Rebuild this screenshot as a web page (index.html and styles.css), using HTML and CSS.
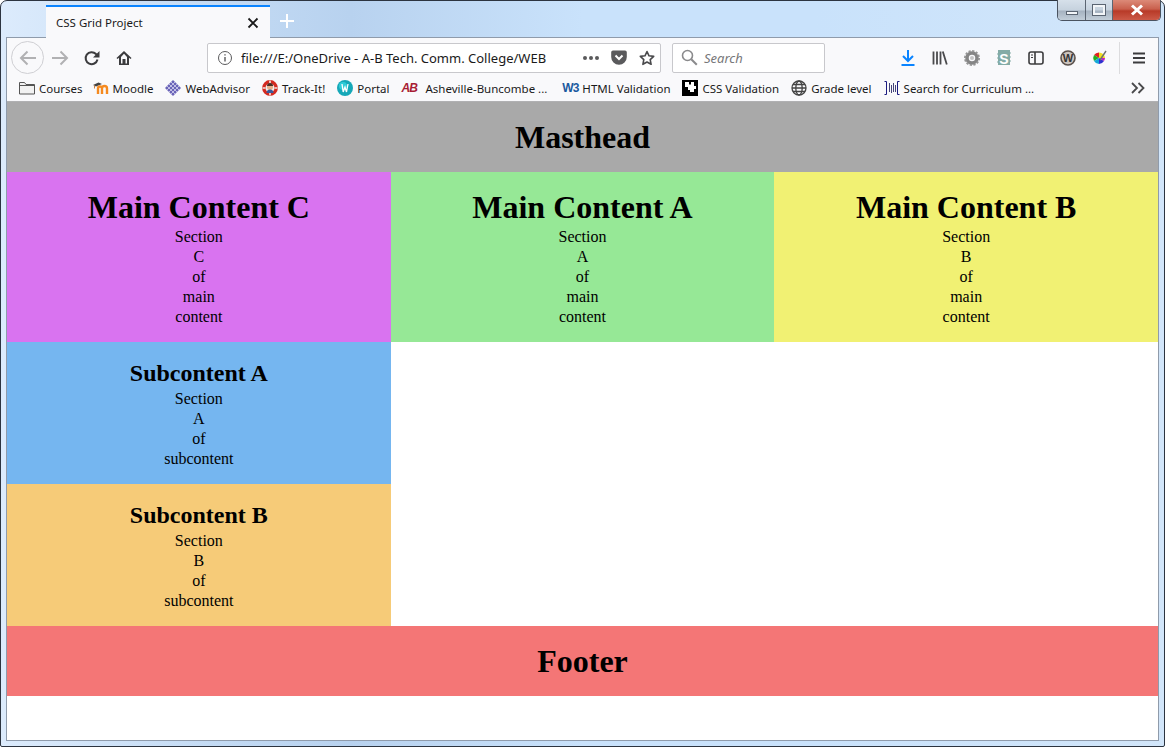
FILE: index.html
```html
<!DOCTYPE html>
<html lang="en">
<head>
    <meta charset="UTF-8">
    <meta name="viewport" content="width=device-width, initial-scale=1.0">
    <title>CSS Grid Project</title>
    <link rel="stylesheet" href="styles.css">
</head>
<body>
<div class="window">
    <div class="titlebar">
        <div class="tab">
            <span class="tab-title">CSS Grid Project</span>
            <svg class="tab-close" width="12" height="12" viewBox="0 0 12 12"><path d="M1.5 1.5l9 9M10.500 1.500l-9 9" stroke="#1a1a1a" stroke-width="1.800" fill="none"/></svg>
        </div>
        <svg class="new-tab" width="16" height="16" viewBox="0 0 16 16"><path d="M8 1v14M1 8h14" stroke="#fff" stroke-width="2" fill="none"/></svg>
        <div class="win-controls">
            <div class="win-btn win-min"><span></span></div>
            <div class="win-btn win-max"><span></span></div>
            <div class="win-btn win-close">
                <svg width="16" height="12" viewBox="0 0 16 12"><path d="M3 1.500l10 9M13 1.500l-10 9" stroke="#fff" stroke-width="3" fill="none"/></svg>
            </div>
        </div>
    </div>

    <div class="browser">
        <div class="navbar">
            <div class="back-btn">
                <svg width="18" height="16" viewBox="0 0 18 16"><path d="M17 8H2M8.500 1.500L2 8l6.500 6.500" stroke="#b1b1b3" stroke-width="2" fill="none"/></svg>
            </div>
            <svg class="fwd" width="18" height="16" viewBox="0 0 18 16"><path d="M1 8h15M9.500 1.500L16 8l-6.500 6.500" stroke="#b1b1b3" stroke-width="2" fill="none"/></svg>
            <svg class="reload" width="16" height="16" viewBox="0 0 16 16"><path d="M13.500 9.500A6 6 0 1 1 12 4l2 2" stroke="#3c3c3e" stroke-width="2" fill="none"/><path d="M15.500 1v6.500H9z" fill="#3c3c3e"/></svg>
            <svg class="home" width="16" height="16" viewBox="0 0 16 16"><path d="M8 1L.5 8l1 1L3 7.700V15h10V7.700L14.500 9l1-1zM5 13.500V7L8 3.800 11 7v6.500H9.500V9h-3v4.500z" fill="#3c3c3e"/></svg>

            <div class="urlbar">
                <svg class="info" width="16" height="16" viewBox="0 0 16 16"><circle cx="8" cy="8" r="6.500" stroke="#5a5a5c" fill="none"/><path d="M8 7v4.500M8 4.200v1.400" stroke="#5a5a5c" stroke-width="1.400"/></svg>
                <span class="url">file:///E:/OneDrive - A-B Tech. Comm. College/WEB</span>
                <span class="dots"><i></i><i></i><i></i></span>
                <svg class="pocket" width="16" height="15" viewBox="0 0 16 15"><path d="M2 .5h12A1.800 1.800 0 0 1 15.800 2.300V7A7.800 7.800 0 0 1 .2 7V2.300A1.800 1.800 0 0 1 2 .5z" fill="#5a5a5c"/><path d="M4.500 5.500L8 9l3.500-3.500" stroke="#fff" stroke-width="2" fill="none"/></svg>
                <svg class="star" width="16" height="16" viewBox="0 0 16 16"><path d="M8 1.500l2 4.300 4.700.6-3.500 3.200.9 4.700L8 12l-4.100 2.300.9-4.700-3.500-3.200 4.700-.6z" stroke="#4a4a4c" stroke-width="1.600" stroke-linejoin="round" fill="none"/></svg>
            </div>

            <div class="searchbar">
                <svg width="17" height="17" viewBox="0 0 17 17"><circle cx="6.500" cy="6.500" r="5" stroke="#8a8a8c" stroke-width="1.600" fill="none"/><path d="M10.300 10.300l5.500 5.500" stroke="#8a8a8c" stroke-width="2"/></svg>
                <span>Search</span>
            </div>

            <div class="tools">
                <svg width="16" height="16" viewBox="0 0 16 16"><path d="M8 0v10.500M3 6l5 5 5-5" stroke="#0a84ff" stroke-width="2" fill="none"/><path d="M1.500 15h13" stroke="#0a84ff" stroke-width="2"/></svg>
                <svg width="16" height="16" viewBox="0 0 16 16"><path d="M1.500 1.500v13M5 1.500v13M8.500 1.500v13M10.800 1.500l4 13" stroke="#4a4a4c" stroke-width="1.800" fill="none"/></svg>
                <svg width="16" height="16" viewBox="0 0 16 16"><circle cx="8" cy="8" r="5" fill="none" stroke="#858585" stroke-width="3.500"/><circle cx="8" cy="8" r="7" fill="none" stroke="#959595" stroke-width="2" stroke-dasharray="2.200 1.460"/><circle cx="8" cy="8" r="2" fill="#c4c4c4"/></svg>
                <svg width="16" height="16" viewBox="0 0 16 16"><path d="M2 0h12v2l1 1-1 1v2l1 1-1 1v2l1 1-1 1v3H2v-2l-1-1 1-1v-2L1 8l1-1V5L1 4l1-1z" fill="#83aba6"/><text x="8" y="13.500" class="s-letter">S</text></svg>
                <svg width="16" height="16" viewBox="0 0 16 16"><rect x="1" y="2" width="14" height="12" rx="2" stroke="#3c3c3e" stroke-width="1.600" fill="none"/><path d="M7 2v12" stroke="#3c3c3e" stroke-width="1.600"/><path d="M3 5h2M3 7.500h2" stroke="#3c3c3e"/></svg>
                <svg width="16" height="16" viewBox="0 0 16 16"><circle cx="8" cy="8" r="7" fill="#cbc3bd" stroke="#5b514c" stroke-width="1.600"/><text x="8" y="12" class="w-letter">W</text></svg>
                <svg width="16" height="16" viewBox="0 0 16 16"><path d="M7 8V2.500A6 6 0 0 0 2 5z" fill="#e02020"/><path d="M7 8L2 5A6 6 0 0 0 2 11z" fill="#20b020"/><path d="M7 8L2 11A6 6 0 0 0 7 14z" fill="#16a8d8"/><path d="M7 8V14A6 6 0 0 0 12 11z" fill="#3030d0"/><path d="M7 8L12 11A6 6 0 0 0 13 8z" fill="#c020c0"/><path d="M7 8h6A6 6 0 0 0 7 2.500z" fill="#f0e020"/><path d="M8 10l6-9" stroke="#707070" stroke-width="1.400"/></svg>
            </div>
            <div class="nav-sep"></div>
            <svg class="menu" width="14" height="12" viewBox="0 0 14 12"><path d="M1 1.500h12M1 6h12M1 10.500h12" stroke="#3c3c3e" stroke-width="1.800"/></svg>
        </div>

        <div class="bookmarks">
            <a class="bm">
                <svg width="16" height="14" viewBox="0 0 16 14"><path d="M.5 13V1.500h5l1.500 2h8.500V13z" fill="#f2f2f2" stroke="#555"/><path d="M.5 4.500h15" stroke="#555"/></svg>Courses</a>
            <a class="bm">
                <svg width="16" height="14" viewBox="0 0 16 14"><path d="M0 4L5.500 1.500 9 3 3 5.500z" fill="#444"/><path d="M1.500 4.500v3" stroke="#c88040"/><path d="M5 13V7.500a2 2 0 0 1 4 0V13M9 7.500a2.500 2.500 0 0 1 5 0V13" stroke="#f58a1f" stroke-width="2.400" fill="none"/></svg>Moodle</a>
            <a class="bm">
                <svg width="16" height="16" viewBox="0 0 16 16"><path d="M8 0l8 8-8 8-8-8z" fill="#6a64b8"/><path d="M4 4l8 8M6 2l8 8M2 6l8 8M12 4l-8 8M10 2l-8 8M14 6l-8 8" stroke="#d8d6f0" stroke-width=".8"/></svg>WebAdvisor</a>
            <a class="bm">
                <svg width="16" height="16" viewBox="0 0 16 16"><circle cx="8" cy="8" r="6.200" fill="#eee" stroke="#d42a20" stroke-width="3.400"/><path d="M8 .5v3M8 12.500v3M.5 8h3M12.500 8h3" stroke="#f4e8e0" stroke-width="1.600"/><circle cx="8" cy="7" r="3" fill="#e8b088"/><path d="M5 6a3 3 0 0 1 6 0z" fill="#4a3028"/><path d="M4.500 13a3.500 3.500 0 0 1 7 0z" fill="#3a5a9a"/></svg>Track-It!</a>
            <a class="bm">
                <svg width="16" height="16" viewBox="0 0 16 16"><circle cx="8" cy="8" r="8" fill="#16a8b8"/><circle cx="6" cy="6" r="4" fill="#30ccd8"/><path d="M5 4l1.200 8L8 7l1.500 5L11 4" stroke="#fff" stroke-width="1.300" fill="none"/></svg>Portal</a>
            <a class="bm bm-wide"><span class="ab-logo">AB</span>Asheville-Buncombe ...</a>
            <a class="bm"><span class="w3-logo">W3</span>HTML Validation</a>
            <a class="bm">
                <svg width="16" height="16" viewBox="0 0 16 16"><rect width="16" height="16" fill="#000"/><path d="M3 2h4v2.500h2V2h3v4h2v3h-2v3H8v-2H6V7H3z" fill="#fff"/></svg>CSS Validation</a>
            <a class="bm">
                <svg width="16" height="16" viewBox="0 0 16 16"><g fill="none" stroke="#444" stroke-width="1.300"><circle cx="8" cy="8" r="7"/><ellipse cx="8" cy="8" rx="3.200" ry="7"/><path d="M1 8h14M2 4.500h12M2 11.500h12"/></g></svg>Grade level</a>
            <a class="bm">
                <svg width="16" height="16" viewBox="0 0 16 16"><path d="M.5 1.500h2v13h-2M15.500 1.500h-2v13h2" stroke="#1a1a80" fill="none"/><path d="M5.500 3v9M7.500 5v8M9.500 3v9M11.500 5v7" stroke="#44447a" fill="none"/></svg>Search for Curriculum ...</a>
            <svg class="chevrons" width="14" height="12" viewBox="0 0 14 12"><path d="M1 1l5 5-5 5M7.500 1l5 5-5 5" stroke="#4a4a4c" stroke-width="1.800" fill="none"/></svg>
        </div>

        <div class="page">
            <header class="cell masthead"><h1>Masthead</h1></header>
            <section class="cell main-c">
                <h1>Main Content C</h1>
                <p>Section C of main content</p>
            </section>
            <section class="cell main-a">
                <h1>Main Content A</h1>
                <p>Section A of main content</p>
            </section>
            <section class="cell main-b">
                <h1>Main Content B</h1>
                <p>Section B of main content</p>
            </section>
            <section class="cell sub-a">
                <h2>Subcontent A</h2>
                <p>Section A of subcontent</p>
            </section>
            <section class="cell sub-b">
                <h2>Subcontent B</h2>
                <p>Section B of subcontent</p>
            </section>
            <footer class="cell footer"><h1>Footer</h1></footer>
        </div>
    </div>
</div>
</body>
</html>
```

FILE: styles.css
```css
html, body {
    margin: 0;
    height: 747px;
    overflow: hidden;
}
body {
    font-family: "Noto Sans", sans-serif;
}

/* window frame */
.window {
    box-sizing: border-box;
    height: 747px;
    display: flex;
    flex-direction: column;
    padding: 0 5px 5px;
    border: 1px solid #2c3440;
    border-radius: 7px 7px 2px 2px;
    background: linear-gradient(90deg, #dcebfc 0%, #c4dbf4 18%, #b8d2ef 30%, #c9e2fb 50%, #c9e2fb 70%, #d2e6fa 100%);
}
.titlebar {
    height: 36px;
    flex: none;
    display: flex;
    align-items: flex-end;
    position: relative;
}
.tab {
    box-sizing: border-box;
    width: 224px;
    height: 33px;
    margin-left: 40px;
    margin-bottom: -1px;
    padding: 0 11px 0 10px;
    display: flex;
    align-items: center;
    justify-content: space-between;
    position: relative;
    z-index: 1;
    background: #f9f9fb;
    border-top: 2px solid #0a84ff;
    font-size: 11.5px;
    color: #1a1a1a;
}
.new-tab {
    margin: 0 0 8px 9px;
}
.win-controls {
    position: absolute;
    top: -1px;
    right: -2px;
    display: flex;
    height: 20px;
    border: 1px solid #4a5360;
    border-top: none;
    border-radius: 0 0 5px 5px;
    overflow: hidden;
}
.win-btn {
    display: flex;
    align-items: center;
    justify-content: center;
    background: linear-gradient(180deg, #d6e0ea 0%, #c6d2de 50%, #a5b2c0 55%, #c2ced9 100%);
    border-right: 1px solid #5b6572;
}
.win-min {
    width: 27px;
}
.win-min span {
    width: 12px;
    height: 4px;
    margin-top: 5px;
    background: #f2f5f8;
    border: 1px solid #5b6572;
    box-sizing: border-box;
}
.win-max {
    width: 26px;
}
.win-max span {
    width: 12px;
    height: 10px;
    background: transparent;
    border: 2px solid #f2f5f8;
    outline: 1px solid #5b6572;
    box-sizing: border-box;
}
.win-close {
    width: 47px;
    border-right: none;
    background: linear-gradient(180deg, #dc8a78 0%, #c9604d 45%, #b83a28 55%, #cc5a48 100%);
}

.browser {
    flex: 1;
    min-height: 0;
    display: flex;
    flex-direction: column;
    border: 1px solid #8f9bab;
    background: #f9f9fb;
}

/* toolbar */
.navbar {
    height: 39px;
    flex: none;
    display: flex;
    align-items: center;
    padding-left: 4px;
}
.back-btn {
    box-sizing: border-box;
    width: 33px;
    height: 33px;
    display: flex;
    align-items: center;
    justify-content: center;
    border: 1px solid #cfcfd3;
    border-radius: 50%;
    flex: none;
}
.fwd {
    margin-left: 7px;
}
.reload {
    margin-left: 15px;
}
.home {
    margin-left: 16px;
}
.urlbar, .searchbar {
    box-sizing: border-box;
    height: 30px;
    display: flex;
    align-items: center;
    background: #fff;
    border: 1px solid #c8c8cc;
    border-radius: 2px;
    flex: none;
}
.urlbar {
    width: 454px;
    margin-left: 75px;
    padding: 0 4px 0 9px;
}
.url {
    width: 306px;
    margin-left: 8px;
    overflow: hidden;
    white-space: nowrap;
    font-size: 13px;
    color: #1a1a1a;
}
.dots {
    display: flex;
    gap: 2px;
    margin-left: 36px;
}
.dots i {
    width: 4px;
    height: 4px;
    border-radius: 50%;
    background: #5a5a5c;
}
.pocket {
    margin-left: 12px;
}
.star {
    margin-left: 12px;
}
.searchbar {
    width: 153px;
    margin-left: 11px;
    padding-left: 8px;
    font-size: 13px;
    font-style: italic;
    color: #77777a;
}
.searchbar span {
    margin-left: 6px;
}
.tools {
    display: flex;
    align-items: center;
    gap: 16px;
    margin-left: 75px;
}
.s-letter {
    font: bold 14px "Liberation Sans", sans-serif;
    fill: #fff;
    text-anchor: middle;
}
.w-letter {
    font: bold 11px "Liberation Sans", sans-serif;
    fill: #333;
    text-anchor: middle;
}
.nav-sep {
    width: 1px;
    height: 32px;
    margin-left: 11px;
    background: #dcdcde;
}
.menu {
    margin-left: 12px;
}

/* bookmarks bar */
.bookmarks {
    height: 22px;
    flex: none;
    display: flex;
    align-items: center;
    padding: 0 0 2px 12px;
    border-bottom: 1px solid #b0b0b2;
    font-size: 11.5px;
    color: #1a1a1a;
}
.bm {
    display: flex;
    align-items: center;
    gap: 4px;
    white-space: nowrap;
    margin-right: 12px;
}
.bm:first-child {
    margin-right: 10px;
}
.bm-wide {
    margin-right: 15px;
}
.ab-logo {
    width: 18px;
    margin-right: 2px;
    font: italic bold 12px "Liberation Sans", sans-serif;
    color: #a81c34;
    letter-spacing: -1px;
}
.w3-logo {
    width: 16px;
    font: bold 12px "Liberation Sans", sans-serif;
    color: #1a5aa0;
    letter-spacing: -1px;
}
.chevrons {
    margin-left: auto;
    margin-right: 13px;
}

/* the grid page itself */
.page {
    flex: 1;
    min-height: 0;
    display: grid;
    grid-template-columns: repeat(3, 1fr);
    grid-auto-rows: min-content;
    background: #fff;
    font-family: "Liberation Serif", serif;
    color: #000;
    text-align: center;
}
.cell {
    padding: 15px;
    box-sizing: border-box;
}
.cell h1 {
    margin: 0;
    font-size: 32px;
    line-height: 40px;
}
.cell h2 {
    margin: 0;
    font-size: 24px;
    line-height: 32px;
}
/* one word per line, like a narrow flex item */
.cell p {
    margin: 0;
    font-size: 16px;
    line-height: 20px;
    word-spacing: 100vw;
}
.masthead {
    grid-column: 1 / 4;
    background: #a9a9a9;
}
.main-c {
    background: #d973f0;
}
.main-a {
    background: #96e896;
}
.main-b {
    background: #f1f173;
}
.sub-a {
    grid-column: 1;
    background: #75b6f0;
}
.sub-b {
    grid-column: 1;
    background: #f6cb78;
}
.footer {
    grid-column: 1 / 4;
    background: #f47676;
}
```
